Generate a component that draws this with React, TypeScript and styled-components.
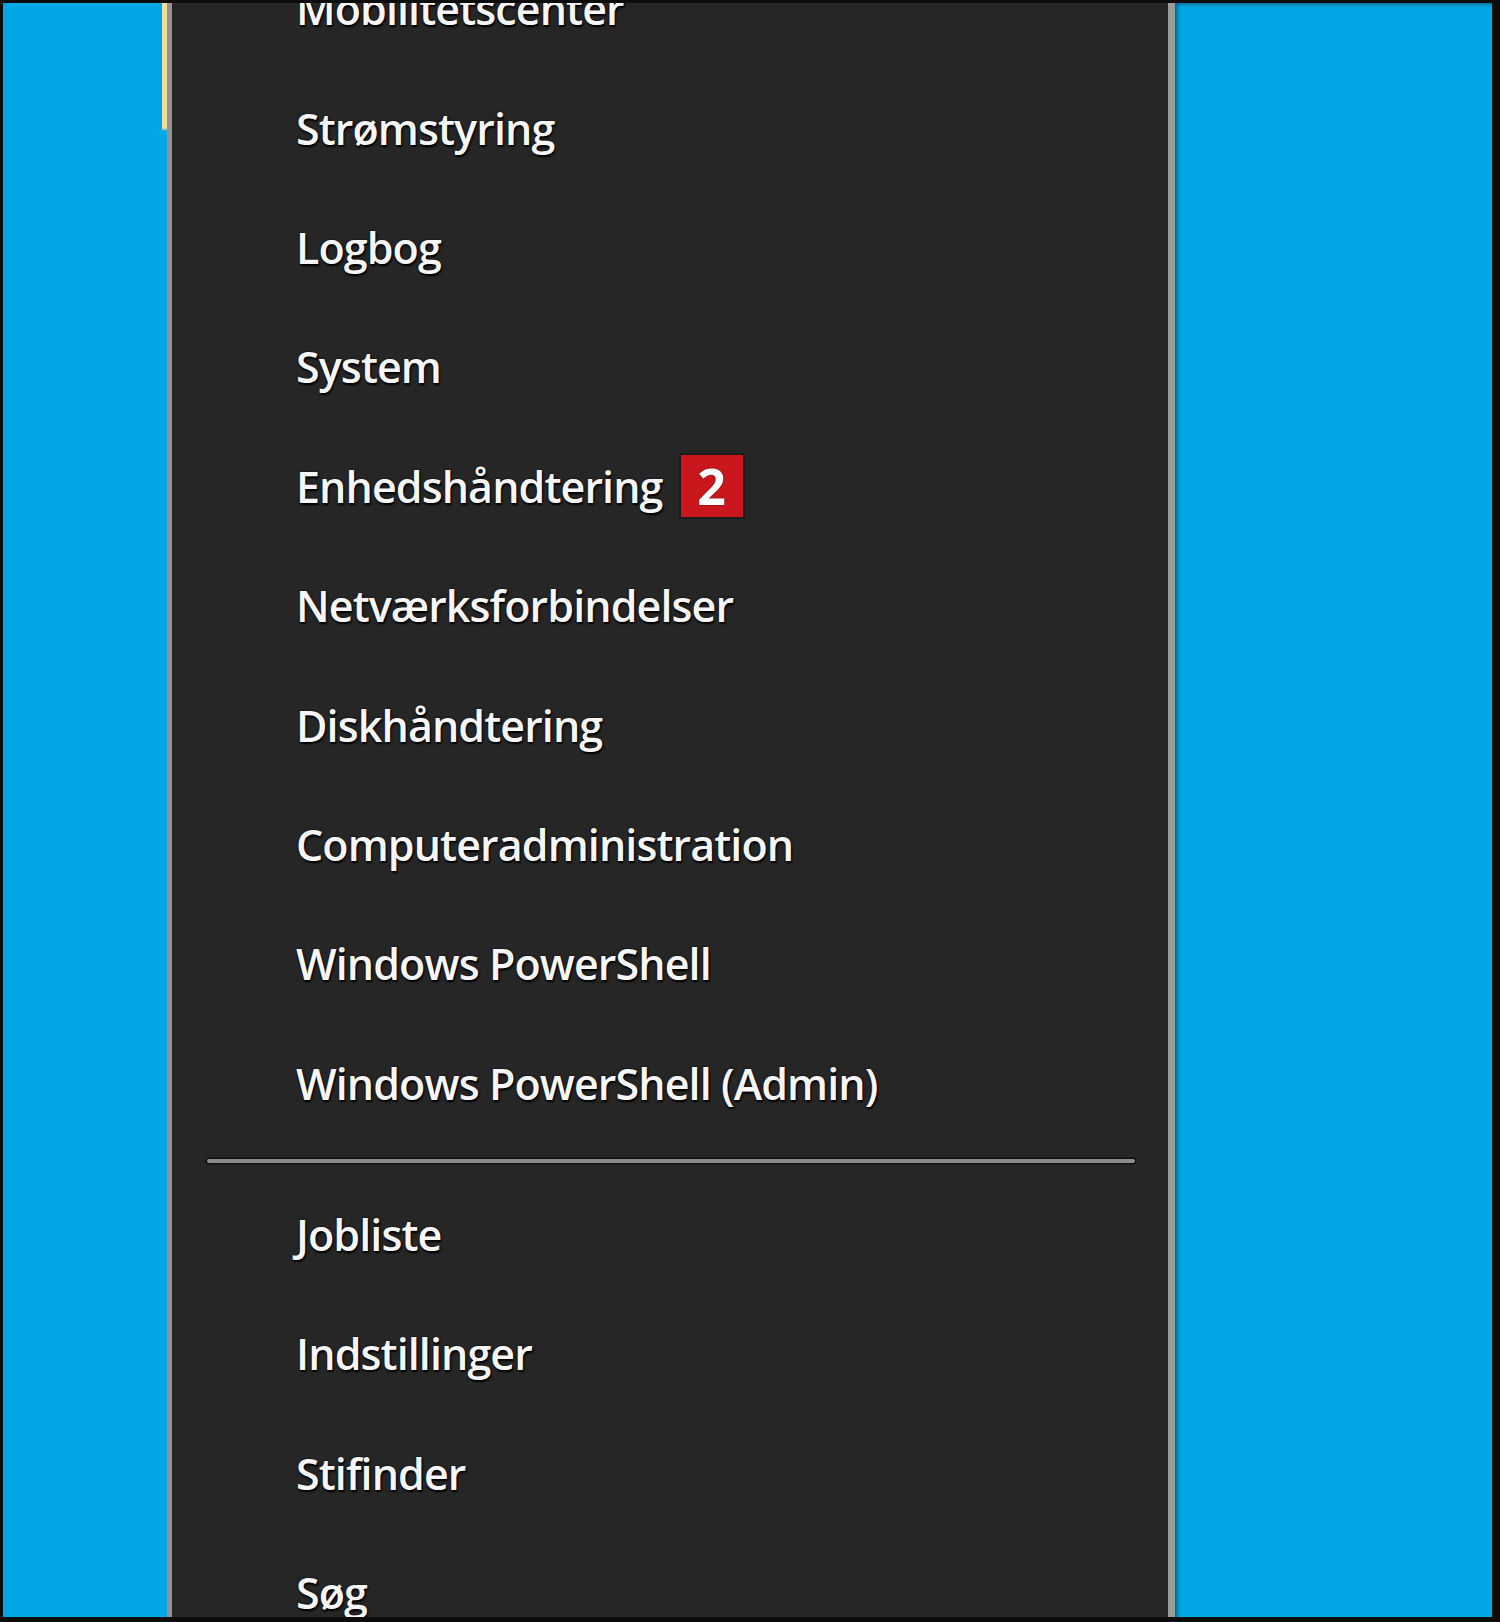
import React from 'react';
import styled, { createGlobalStyle } from 'styled-components';

const GlobalStyle = createGlobalStyle`
html, body {
  margin: 0;
  padding: 0;
  background: #0c0c0c;
}
`;

const Frame = styled.div`
width: 1500px;
height: 1622px;
box-sizing: border-box;
border-style: solid;
border-color: #0c0c0c;
border-width: 3px 8px 5px 3px;
display: flex;
overflow: hidden;
`;

const Desktop = styled.div<{ $shade?: boolean }>`
flex: ${p => (p.$shade ? 1 : '0 0 159px')};
background: #02a8e6;
box-shadow: ${p => (p.$shade ? 'inset 4px 3px 4px -2px rgba(0,0,0,0.45)' : 'none')};
`;

const Edge = styled.div<{ $highlight?: boolean }>`
flex: 0 0 5px;
background: ${p =>
  p.$highlight
    ? 'linear-gradient(to bottom, #eedd9c 0, #eedd9c 125px, #02a8e6 128px)'
    : '#9b918d'};
`;

const Menu = styled.nav`
flex: 0 0 1003px;
background: #262626;
border-right: 7px solid #9c9c9c;
box-sizing: border-box;
overflow: hidden;
font-family: "Open Sans", "Noto Sans", sans-serif;
`;

const List = styled.ul`
list-style: none;
margin: -54px 0 0 0;
padding: 0;
`;

const Item = styled.li`
height: 119.4px;
display: flex;
align-items: center;
gap: 16px;
padding-left: 124px;
box-sizing: border-box;
`;

const Label = styled.span`
color: #f6f6f6;
font-size: 43px;
font-weight: 600;
letter-spacing: -0.9px;
line-height: 1;
text-shadow: 0 0 2px #000, 1px 2px 2px #000;
`;

const Badge = styled.span`
width: 66px;
height: 66px;
box-sizing: border-box;
background: #c9171d;
border: 2px solid #1c1c1c;
color: #fff;
display: flex;
align-items: center;
justify-content: center;
font-family: "Open Sans", "Noto Sans", sans-serif;
font-size: 50px;
font-weight: 700;
line-height: 1;
text-shadow: 0 0 2px rgba(80,0,0,0.8);
`;

const Separator = styled.li`
height: 32px;
display: flex;
align-items: center;
padding: 4px 33px 0 35px;
box-sizing: border-box;
&::after {
  content: '';
  flex: 1;
  height: 4px;
  background: #8d8d8d;
  box-shadow: 0 0 0 1.5px #111;
  border-radius: 2px;
}
`;

type Entry = { label: string; badge?: number } | 'sep';

const entries: Entry[] = [
  { label: 'Mobilitetscenter' },
  { label: 'Strømstyring' },
  { label: 'Logbog' },
  { label: 'System' },
  { label: 'Enhedshåndtering', badge: 2 },
  { label: 'Netværksforbindelser' },
  { label: 'Diskhåndtering' },
  { label: 'Computeradministration' },
  { label: 'Windows PowerShell' },
  { label: 'Windows PowerShell (Admin)' },
  'sep',
  { label: 'Jobliste' },
  { label: 'Indstillinger' },
  { label: 'Stifinder' },
  { label: 'Søg' },
];

export default function App() {
  return (
    <>
      <GlobalStyle />
      <Frame>
        <Desktop />
        <Edge $highlight />
        <Edge />
        <Menu>
          <List>
            {entries.map((e, i) =>
              e === 'sep' ? (
                <Separator key={i} />
              ) : (
                <Item key={i}>
                  <Label>{e.label}</Label>
                  {e.badge && <Badge>{e.badge}</Badge>}
                </Item>
              )
            )}
          </List>
        </Menu>
        <Desktop $shade />
      </Frame>
    </>
  );
}
